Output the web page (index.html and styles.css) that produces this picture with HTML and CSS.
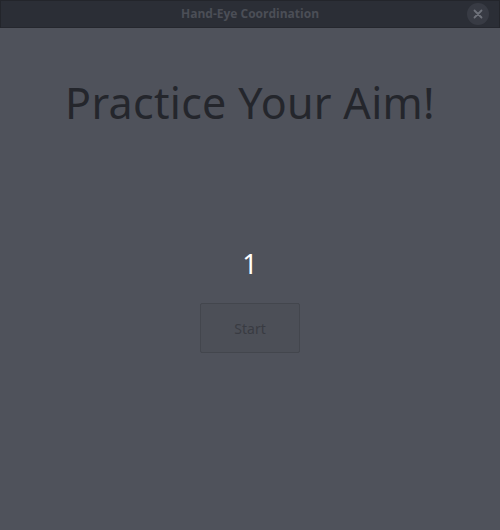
FILE: index.html
```html
<!DOCTYPE html>
<html>
<head>
<meta charset="utf-8">
<link rel="stylesheet" href="styles.css">
</head>
<body>
<div class="window">
  <header class="titlebar">
    <span class="title">Hand-Eye Coordination</span>
    <button class="close" aria-label="Close">
      <svg width="10" height="10" viewBox="0 0 10 10"><path d="M1.5 1.5 L8.5 8.5 M8.5 1.5 L1.5 8.5" stroke="#6e717a" stroke-width="1.8" stroke-linecap="round"/></svg>
    </button>
  </header>
  <main class="content">
    <h1 class="heading">Practice Your Aim!</h1>
    <div class="count">1</div>
    <button class="start">Start</button>
  </main>
</div>
</body>
</html>
```
FILE: styles.css
```css
html, body {
  margin: 0;
  padding: 0;
  width: 500px;
  height: 530px;
  overflow: hidden;
  background: #4f525b;
}
.window {
  display: flex;
  flex-direction: column;
  height: 530px;
  font-family: "Noto Sans", "Open Sans", sans-serif;
}
.titlebar {
  position: relative;
  height: 28px;
  flex: 0 0 28px;
  background: #2b2e36;
  border: 1px solid #23252b;
  border-bottom: 1px solid #25272e;
  box-sizing: border-box;
  display: flex;
  align-items: center;
  justify-content: center;
}
.title {
  font-family: "Open Sans", "Noto Sans", sans-serif;
  font-weight: 700;
  font-size: 12px;
  color: #4b4e57;
  margin-top: -2px;
}
.close {
  position: absolute;
  right: 10px;
  top: 2px;
  width: 22px;
  height: 22px;
  border-radius: 50%;
  border: none;
  background: #383b44;
  padding: 0;
  display: flex;
  align-items: center;
  justify-content: center;
}
.content {
  flex: 1;
  display: flex;
  flex-direction: column;
  align-items: center;
}
.heading {
  margin: 50px 0 0;
  font-weight: 400;
  font-size: 43px;
  line-height: 50px;
  color: #24262c;
  letter-spacing: 0.3px;
}
.count {
  margin-top: 120px;
  font-size: 27px;
  line-height: 32px;
  color: #ffffff;
}
.start {
  margin-top: 23px;
  width: 100px;
  height: 50px;
  box-sizing: border-box;
  background: #4c4f57;
  border: 1px solid #43464d;
  border-radius: 2px;
  font-family: "Noto Sans", "Open Sans", sans-serif;
  font-size: 14px;
  color: #393b42;
  padding: 0;
}
```
